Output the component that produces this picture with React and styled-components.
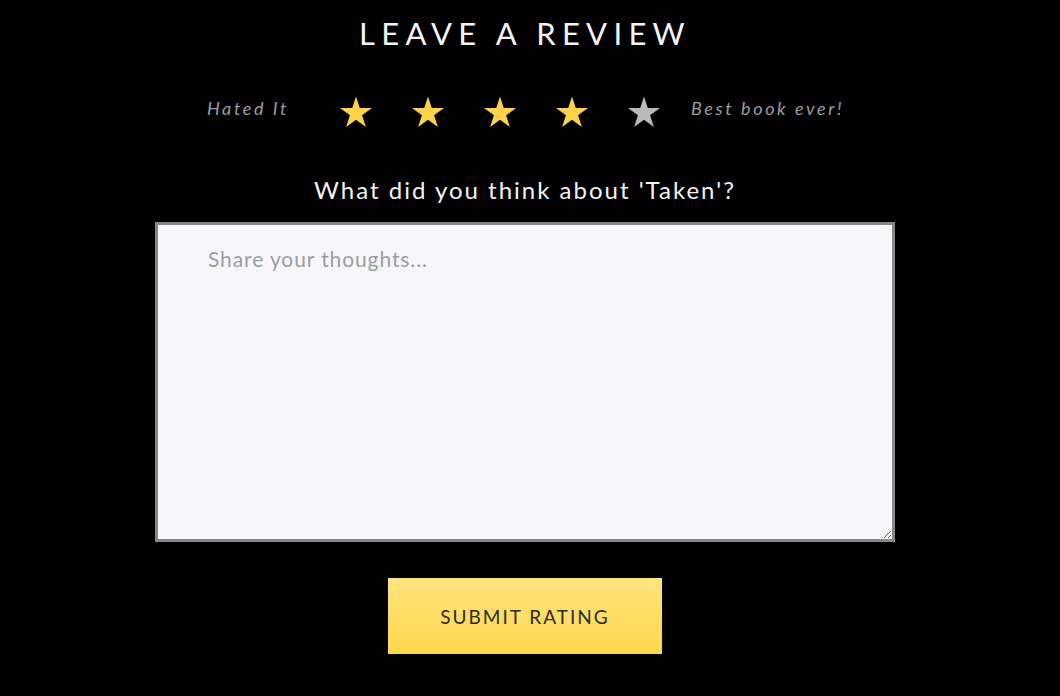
import React from 'react';
import styled, { createGlobalStyle } from 'styled-components';

const GlobalStyle = createGlobalStyle`
  html, body {
    margin: 0;
    padding: 0;
    background: #000;
  }
  body {
    font-family: Lato, 'Noto Sans', sans-serif;
  }
`;

const Page = styled.div`
  width: 1050px;
  min-height: 696px;
  padding-top: 15px;
  box-sizing: border-box;
  display: flex;
  flex-direction: column;
  align-items: center;
  background: #000;
  color: #fff;
`;

const Title = styled.h1`
  margin: 0;
  font-size: 31px;
  line-height: 36px;
  font-weight: 400;
  letter-spacing: 6.3px;
  text-transform: uppercase;
  color: #f4f4f4;
`;

const RatingRow = styled.div`
  margin-top: 41px;
  height: 40px;
  display: flex;
  align-items: center;
`;

const Label = styled.span`
  width: ${p => p.width}px;
  text-align: ${p => p.align};
  font-size: 18px;
  font-style: italic;
  letter-spacing: 2.6px;
  color: #9a9ca3;
  padding-bottom: 8px;
  margin: ${p => p.gap};
  white-space: nowrap;
`;

const Stars = styled.div`
  display: flex;
  gap: 40px;
`;

const StarIcon = styled.svg`
  width: 32px;
  height: 32px;
  display: block;
  fill: ${p => (p.on ? '#fdd34c' : '#b9b9b9')};
`;

const Question = styled.p`
  margin: 43px 0 0;
  font-size: 24px;
  line-height: 30px;
  letter-spacing: 2px;
  color: #f4f4f4;
`;

const Thoughts = styled.textarea`
  margin-top: 17px;
  width: 740px;
  height: 320px;
  box-sizing: border-box;
  border: 3px solid #878787;
  background: #f7f7f9;
  padding: 22px 50px;
  font-family: Lato, 'Noto Sans', sans-serif;
  font-size: 21px;
  line-height: 24px;
  letter-spacing: 0.9px;
  color: #333;
  outline: none;
  &::placeholder {
    color: #9a9da4;
  }
`;

const SubmitButton = styled.button`
  margin-top: 36px;
  width: 274px;
  height: 76px;
  border: none;
  background: linear-gradient(to bottom, #ffe47f, #fdd74c);
  color: #2b2b2b;
  font-family: Lato, 'Noto Sans', sans-serif;
  font-size: 19px;
  letter-spacing: 2px;
  text-transform: uppercase;
  cursor: pointer;
`;

const Star = ({ on }) => (
  <StarIcon on={on ? 1 : 0} viewBox="0 0 32 31">
    <polygon points="16,0 19.8,11.6 32,11.6 22.1,18.8 25.9,30.4 16,23.2 6.1,30.4 9.9,18.8 0,11.6 12.2,11.6" />
  </StarIcon>
);

export default function App() {
  const rating = 4;
  return (
    <>
      <GlobalStyle />
      <Page>
        <Title>Leave a Review</Title>
        <RatingRow>
          <Label width={133} align="right" gap="0 51px 0 0">Hated It</Label>
          <Stars>
            {[1, 2, 3, 4, 5].map(n => (
              <Star key={n} on={n <= rating} />
            ))}
          </Stars>
          <Label width={203} align="left" gap="0 0 0 31px">Best book ever!</Label>
        </RatingRow>
        <Question>What did you think about 'Taken'?</Question>
        <Thoughts placeholder="Share your thoughts..." />
        <SubmitButton>Submit Rating</SubmitButton>
      </Page>
    </>
  );
}
